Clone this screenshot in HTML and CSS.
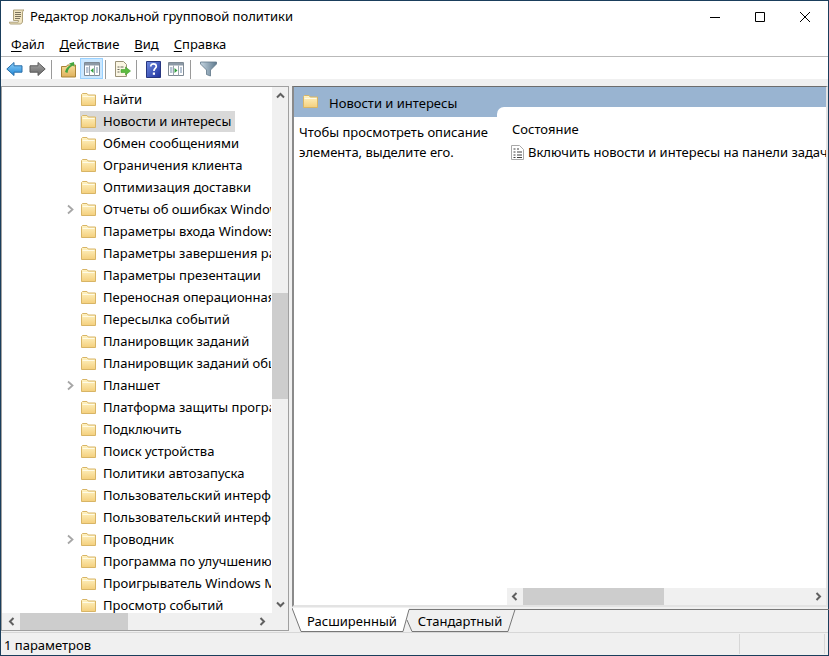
FILE: index.html
```html
<!DOCTYPE html>
<html lang="ru">
<head>
<meta charset="utf-8">
<title>Редактор локальной групповой политики</title>
<link rel="stylesheet" href="styles.css">
</head>
<body>
<svg class="defs" width="0" height="0">
  <defs>
    <linearGradient id="fg" x1="0" y1="0" x2="0" y2="1"><stop offset="0" stop-color="#fff4c6"/><stop offset="1" stop-color="#f4cf7c"/></linearGradient>
    <symbol id="folder" viewBox="0 0 15 15">
      <path d="M.5 13.500V2.500l1-1h4.500l1.200 1.500h7.300v10.500z" fill="url(#fg)" stroke="#d8b566"/>
      <path d="M1.500 4.500h12" stroke="#fffbe6"/>
    </symbol>
    <symbol id="chev-r" viewBox="0 0 9 11"><path d="M2 1.500l4.500 4-4.500 4" fill="none" stroke="currentColor" stroke-width="1.800"/></symbol>
  </defs>
</svg>
<div class="window">
  <header class="titlebar">
    <svg class="app-icon" width="16" height="16" viewBox="0 0 16 16">
      <path d="M4.500 1h10.500c-1 .5-1.500 1.500-1.500 3v8c0 1.500-.8 3-2.300 3H2c-1 0-1.700-.7-1.700-1.800h8.900c0-.6.100-1.200.3-1.700H4.500z" fill="#f1e5c2" stroke="#a5976f" stroke-width=".9"/>
      <path d="M6 3.500h6M6 5.500h6M6 7.500h6M6 9.500h5" stroke="#6d6552" stroke-width=".9"/>
    </svg>
    <span class="title">Редактор локальной групповой политики</span>
    <div class="controls">
      <span class="ctl"><svg width="12" height="12" viewBox="0 0 12 12"><path d="M1 6.500h10" stroke="#000"/></svg></span>
      <span class="ctl"><svg width="12" height="12" viewBox="0 0 12 12"><path d="M1.500 1.500h9v9h-9z" fill="none" stroke="#000"/></svg></span>
      <span class="ctl"><svg width="12" height="12" viewBox="0 0 12 12"><path d="M1 1l10 10M11 1L1 11" stroke="#000" fill="none"/></svg></span>
    </div>
  </header>
  <nav class="menubar">
    <span class="menu"><u>Ф</u>айл</span>
    <span class="menu"><u>Д</u>ействие</span>
    <span class="menu"><u>В</u>ид</span>
    <span class="menu"><u>С</u>правка</span>
  </nav>
  <div class="toolbar">
    <span class="tool tool-first"><svg width="17" height="16" viewBox="0 0 17 16"><defs><linearGradient id="bl" x1="0" y1="0" x2="0" y2="1"><stop offset="0" stop-color="#8fd0fa"/><stop offset="1" stop-color="#1d86d6"/></linearGradient></defs><path d="M.8 8L8 1.500v3.300h8v6.400H8v3.300z" fill="url(#bl)" stroke="#2a6ea8"/></svg></span>
    <span class="tool"><svg width="17" height="16" viewBox="0 0 17 16"><defs><linearGradient id="gr" x1="0" y1="0" x2="0" y2="1"><stop offset="0" stop-color="#a8a8a8"/><stop offset="1" stop-color="#666"/></linearGradient></defs><path d="M16.200 8L9 1.500v3.300H1v6.400h8v3.300z" fill="url(#gr)" stroke="#5c5c5c"/></svg></span>
    <span class="sep"></span>
    <span class="tool tool-up"><svg width="15" height="17" viewBox="0 0 15 17"><defs><linearGradient id="fu" x1="0" y1="0" x2="0" y2="1"><stop offset="0" stop-color="#f7dd9b"/><stop offset="1" stop-color="#dfb15c"/></linearGradient></defs><path d="M.5 16V5.500h5l1-1.500h8v12z" fill="url(#fu)" stroke="#a98438"/><path d="M4 11c1-4 3-6 6-7L8 2.500 13 1l.5 5-1.500-1.500C9 6 7 8 6.500 12z" fill="#43a63f"/></svg></span>
    <span class="tool tool-on"><svg width="16" height="14" viewBox="0 0 16 14"><path d="M.5.500h15v13H.500z" fill="#fff" stroke="#7f8a94"/><path d="M1 1h14v2.500H1z" fill="#8c99a6"/><path d="M5.500 3.500v10M10.500 3.500v10" stroke="#9aa5af"/><path d="M2 6h2.500M2 8h2.500M2 10h2.500M12 6h2M12 8h2M12 10h2" stroke="#6f88a8"/><path d="M9.500 6v5L6.500 8.500z" fill="#2f9e3c"/></svg></span>
    <span class="sep sep-tight"></span>
    <span class="tool tool-exp"><svg width="17" height="17" viewBox="0 0 17 17"><path d="M1.500.500h8l3 3v12h-11z" fill="#fbf6e3" stroke="#9a9278"/><path d="M3.500 6h2M3.500 8.500h2M3.500 11h2M6.500 6h3" stroke="#6a6a5c"/><path d="M7 8.500h4.500V6l5 4-5 4v-2.500H7z" fill="#5cbb3f" stroke="#3f9a2a" stroke-width=".6"/></svg></span>
    <span class="sep"></span>
    <span class="tool tool-help"><svg width="15" height="17" viewBox="0 0 15 17"><defs><linearGradient id="hb" x1="0" y1="0" x2="1" y2="1"><stop offset="0" stop-color="#6f8be0"/><stop offset="1" stop-color="#1c2f9c"/></linearGradient></defs><path d="M.5.500h14v16H.500z" fill="url(#hb)" stroke="#26357f"/><path d="M4.800 5.500C4.800 3.600 6 2.800 7.500 2.800s2.800.8 2.800 2.500c0 2.200-2.400 2.200-2.400 4.700" fill="none" stroke="#fff" stroke-width="1.700"/><path d="M6.800 11.500h2.200v2.300H6.800z" fill="#fff"/></svg></span>
    <span class="tool tool-panel"><svg width="16" height="14" viewBox="0 0 16 14"><path d="M.5.500h15v13H.500z" fill="#fff" stroke="#7f8a94"/><path d="M1 1h14v2.500H1z" fill="#8c99a6"/><path d="M5.500 3.500v10M10.500 3.500v10" stroke="#9aa5af"/><path d="M2 6h2.500M2 8h2.500M2 10h2.500M12 6h2M12 8h2M12 10h2" stroke="#6f88a8"/><path d="M6.500 6v5l3-2.500z" fill="#2f9e3c"/></svg></span>
    <span class="sep"></span>
    <span class="tool tool-filter"><svg width="17" height="16" viewBox="0 0 17 16"><defs><linearGradient id="fl" x1="0" y1="0" x2="1" y2="0"><stop offset="0" stop-color="#c4d4e0"/><stop offset="1" stop-color="#5f7a8e"/></linearGradient></defs><path d="M.5 1h16v2l-6 6v6l-4-1.500V9l-6-6z" fill="url(#fl)" stroke="#5f7688" stroke-width=".8"/></svg></span>
  </div>
  <main class="workspace">
    <section class="tree-pane">
      <div class="tree-top">
        <ul class="tree">
          <li class="node"><span class="label"><svg class="ficon"><use href="#folder"/></svg><span>Найти</span></span></li>
          <li class="node"><span class="label label-sel"><svg class="ficon"><use href="#folder"/></svg><span>Новости и интересы</span></span></li>
          <li class="node"><span class="label"><svg class="ficon"><use href="#folder"/></svg><span>Обмен сообщениями</span></span></li>
          <li class="node"><span class="label"><svg class="ficon"><use href="#folder"/></svg><span>Ограничения клиента</span></span></li>
          <li class="node"><span class="label"><svg class="ficon"><use href="#folder"/></svg><span>Оптимизация доставки</span></span></li>
          <li class="node has-kids"><svg class="exp"><use href="#chev-r"/></svg><span class="label"><svg class="ficon"><use href="#folder"/></svg><span>Отчеты об ошибках Windows</span></span></li>
          <li class="node"><span class="label"><svg class="ficon"><use href="#folder"/></svg><span>Параметры входа Windows</span></span></li>
          <li class="node"><span class="label"><svg class="ficon"><use href="#folder"/></svg><span>Параметры завершения работы</span></span></li>
          <li class="node"><span class="label"><svg class="ficon"><use href="#folder"/></svg><span>Параметры презентации</span></span></li>
          <li class="node"><span class="label"><svg class="ficon"><use href="#folder"/></svg><span>Переносная операционная система</span></span></li>
          <li class="node"><span class="label"><svg class="ficon"><use href="#folder"/></svg><span>Пересылка событий</span></span></li>
          <li class="node"><span class="label"><svg class="ficon"><use href="#folder"/></svg><span>Планировщик заданий</span></span></li>
          <li class="node"><span class="label"><svg class="ficon"><use href="#folder"/></svg><span>Планировщик заданий общий</span></span></li>
          <li class="node has-kids"><svg class="exp"><use href="#chev-r"/></svg><span class="label"><svg class="ficon"><use href="#folder"/></svg><span>Планшет</span></span></li>
          <li class="node"><span class="label"><svg class="ficon"><use href="#folder"/></svg><span>Платформа защиты программ</span></span></li>
          <li class="node"><span class="label"><svg class="ficon"><use href="#folder"/></svg><span>Подключить</span></span></li>
          <li class="node"><span class="label"><svg class="ficon"><use href="#folder"/></svg><span>Поиск устройства</span></span></li>
          <li class="node"><span class="label"><svg class="ficon"><use href="#folder"/></svg><span>Политики автозапуска</span></span></li>
          <li class="node"><span class="label"><svg class="ficon"><use href="#folder"/></svg><span>Пользовательский интерфейс</span></span></li>
          <li class="node"><span class="label"><svg class="ficon"><use href="#folder"/></svg><span>Пользовательский интерфейс</span></span></li>
          <li class="node has-kids"><svg class="exp"><use href="#chev-r"/></svg><span class="label"><svg class="ficon"><use href="#folder"/></svg><span>Проводник</span></span></li>
          <li class="node"><span class="label"><svg class="ficon"><use href="#folder"/></svg><span>Программа по улучшению</span></span></li>
          <li class="node"><span class="label"><svg class="ficon"><use href="#folder"/></svg><span>Проигрыватель Windows Media</span></span></li>
          <li class="node"><span class="label"><svg class="ficon"><use href="#folder"/></svg><span>Просмотр событий</span></span></li>
        </ul>
        <div class="vscroll">
          <svg class="arr" width="9" height="7" viewBox="0 0 9 7"><path d="M1 5.500l3.500-3.500L8 5.500" fill="none" stroke="#606060" stroke-width="2"/></svg>
          <div class="vtrack"><div class="vthumb"></div></div>
          <svg class="arr" width="9" height="7" viewBox="0 0 9 7"><path d="M1 1.500L4.500 5 8 1.500" fill="none" stroke="#606060" stroke-width="2"/></svg>
        </div>
      </div>
      <div class="hscroll hscroll-tree">
        <svg class="arr" width="7" height="9" viewBox="0 0 7 9"><path d="M5.500 1L2 4.500 5.500 8" fill="none" stroke="#606060" stroke-width="2"/></svg>
        <div class="htrack"><div class="hthumb hthumb-tree"></div></div>
        <svg class="arr" width="7" height="9" viewBox="0 0 7 9"><path d="M1.500 1L5 4.500 1.500 8" fill="none" stroke="#606060" stroke-width="2"/></svg>
      </div>
    </section>
    <section class="detail-pane">
      <div class="detail-frame">
        <div class="detail-head">
          <svg class="ficon"><use href="#folder"/></svg>
          <span>Новости и интересы</span>
          <div class="notch"></div>
        </div>
        <div class="detail-body">
          <p class="desc">Чтобы просмотреть описание элемента, выделите его.</p>
          <div class="list">
            <div class="list-rows">
              <div class="col-head">Состояние</div>
              <div class="list-row">
                <svg width="13" height="15" viewBox="0 0 13 15"><path d="M.5.500h8l4 4v10H.500z" fill="#fff" stroke="#a8a8a8"/><path d="M2.500 4h2M2.500 7h2M2.500 10h2M2.500 12.500h2M6 4h2M6 7h5M6 10h5M6 12.500h5" stroke="#3f3f3f"/></svg>
                <span>Включить новости и интересы на панели задач</span>
              </div>
            </div>
            <div class="hscroll hscroll-list">
              <svg class="arr" width="7" height="9" viewBox="0 0 7 9"><path d="M5.500 1L2 4.500 5.500 8" fill="none" stroke="#606060" stroke-width="2"/></svg>
              <div class="htrack"><div class="hthumb hthumb-list"></div></div>
              <svg class="arr" width="7" height="9" viewBox="0 0 7 9"><path d="M1.500 1L5 4.500 1.500 8" fill="none" stroke="#606060" stroke-width="2"/></svg>
            </div>
          </div>
        </div>
      </div>
      <div class="tabs">
        <svg class="tab-art" width="537" height="25" viewBox="0 0 537 25">
          <path d="M115 13L120 24.500H216L223 2H118z" fill="#f0f0f0"/>
          <path d="M116.500 2.500H537M115 13l5 11.500H216L223 2.500" fill="none" stroke="#777"/>
          <path d="M0 1L9 24.500H111L117 2.500H117V1z" fill="#fff"/>
          <path d="M0 1L9 24.500H111L117 2.500" fill="none" stroke="#777"/>
        </svg>
        <span class="tab tab-a">Расширенный</span>
        <span class="tab tab-b">Стандартный</span>
      </div>
    </section>
  </main>
  <footer class="status">
    <span class="st-main">1 параметров</span>
    <span class="st-cell st-mid"></span>
    <span class="st-cell st-end"></span>
  </footer>
</div>
</body>
</html>
```

FILE: styles.css
```css
html, body { margin: 0; padding: 0; height: 100%; }
body { font-family: "Noto Sans", "Open Sans", sans-serif; font-size: 13px; color: #000; overflow: hidden; background: #fff; }
.defs { position: absolute; }
svg { display: block; flex: none; }
.window { box-sizing: border-box; width: 829px; height: 656px; border: 1px solid #1a3e5c; display: flex; flex-direction: column; background: #fff; }

.titlebar { height: 31px; display: flex; align-items: center; padding-left: 8px; flex: none; }
.title { margin-left: 5px; margin-top: -2px; font-size: 13px; white-space: nowrap; }
.app-icon { margin-top: 1px; }
.controls { margin-left: auto; display: flex; align-self: stretch; padding-right: 1px; }
.ctl { width: 45px; display: flex; align-items: center; justify-content: center; }

.menubar { height: 24px; display: flex; align-items: center; padding-left: 10px; gap: 15px; flex: none; border-bottom: 1px solid #b9b9b9; box-sizing: content-box; }
.menu u { text-underline-offset: 2px; }

.toolbar { height: 22px; box-sizing: border-box; padding: 2px 0 0 5px; display: flex; align-items: center; flex: none; background: #fff; }
.tool { display: flex; align-items: center; justify-content: center; }
.tool-first { margin-right: 6px; }
.sep { width: 1px; height: 19px; background: #9a9a9a; margin: 0 9px 0 5px; }
.sep-tight { margin-left: 2px; margin-right: 8px; }
.tool-up { margin-right: 4px; }
.tool-on { box-sizing: border-box; width: 23px; height: 21px; margin-top: -1px; background: #cce8ff; border: 1px solid #99d1ff; }
.tool-help { margin-right: 7px; }
.tool-panel { margin-right: 1px; }

.workspace { flex: 1; min-height: 0; display: flex; background: #f0f0f0; padding-top: 7px; }
.tree-pane { box-sizing: border-box; width: 288px; height: 545px; display: flex; flex-direction: column; background: #fff; border: 1px solid #a0a0a0; flex: none; }
.tree-top { flex: 1; min-height: 0; display: flex; overflow: hidden; }
.tree { list-style: none; margin: 0 1px 0 0; padding: 1px 0 0; width: 269px; flex: none; overflow: hidden; }
.node { height: 22px; display: flex; align-items: center; position: relative; padding-left: 78px; white-space: nowrap; }
.exp { position: absolute; left: 64px; top: 6px; width: 9px; height: 11px; color: #a6a6a6; }
.label { display: inline-flex; align-items: center; gap: 7px; height: 21px; padding: 0 4px 0 1px; }
.label-sel { background: #d9d9d9; }
.ficon { width: 15px; height: 15px; }
.vscroll { width: 16px; flex: none; background: #f0f0f0; display: flex; flex-direction: column; align-items: center; padding: 5px 0; box-sizing: border-box; }
.vtrack { flex: 1; width: 100%; margin: 5px 0; }
.vthumb { width: 100%; height: 106px; margin-top: 189px; background: #cdcdcd; }
.hscroll { height: 17px; background: #f0f0f0; display: flex; align-items: center; flex: none; box-sizing: border-box; }
.hscroll-tree { padding: 0 22px 0 6px; }
.hscroll-list { padding: 0 4px; }
.htrack { flex: 1; height: 100%; margin: 0 6px; }
.hthumb { height: 100%; background: #cdcdcd; }
.hthumb-tree { width: 108px; margin-left: -1px; }
.hthumb-list { width: 141px; margin-left: -1px; }

.detail-pane { width: 536px; margin-left: 3px; flex: none; display: flex; flex-direction: column; height: 546px; }
.detail-frame { flex: 1; min-height: 0; display: flex; flex-direction: column; background: #fff; border-top: 1px solid #6d6d6d; border-left: 2px solid #8a8a8a; border-right: 2px solid #e3e3e3; border-bottom: 2px solid #e3e3e3; }
.detail-head { height: 30px; flex: none; background: #99b4d1; position: relative; display: flex; align-items: flex-start; gap: 11px; padding: 7px 0 0 9px; box-sizing: border-box; line-height: 18px; }
.notch { position: absolute; left: 203px; right: 0; bottom: 0; height: 10px; background: #fff; border-top-left-radius: 7px; }
.detail-body { flex: 1; min-height: 0; display: flex; }
.desc { width: 213px; box-sizing: border-box; margin: 0; padding: 5px 0 0 5px; line-height: 20px; flex: none; }
.list { flex: 1; min-width: 0; display: flex; flex-direction: column; }
.list-rows { flex: 1; min-height: 0; overflow: hidden; padding: 3px 0 0 5px; white-space: nowrap; }
.col-head { height: 18px; line-height: 18px; margin-bottom: 4px; }
.list-row { display: flex; align-items: center; gap: 4px; margin-left: -1px; height: 20px; }

.tabs { height: 25px; box-sizing: border-box; padding-top: 3px; flex: none; position: relative; display: flex; align-items: center; }
.tab-art { position: absolute; left: 0; top: 0; }
.tab { position: relative; }
.tab-a { margin-left: 15px; }
.tab-b { margin-left: 21px; }

.status { height: 22px; flex: none; background: #f0f0f0; border-top: 1px solid #d7d7d7; display: flex; align-items: center; }
.st-main { width: 735px; padding: 1px 0 0 3px; }
.st-cell { height: 20px; border-left: 1px solid #d7d7d7; }
.st-mid { width: 84px; }
.st-end { width: 2px; }
```
